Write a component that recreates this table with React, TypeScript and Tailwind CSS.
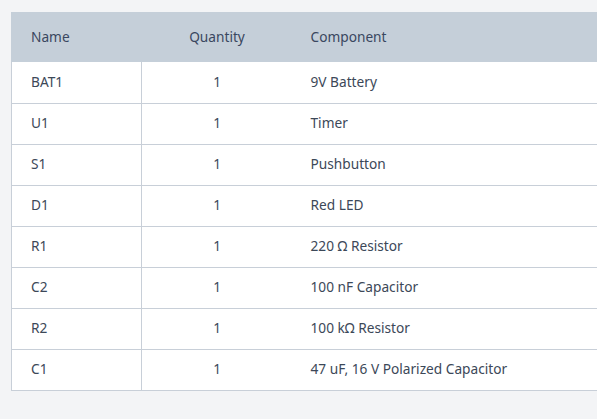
import React from "react";

const rows: [string, string, string][] = [
  ["BAT1", "1", "9V Battery"],
  ["U1", "1", "Timer"],
  ["S1", "1", "Pushbutton"],
  ["D1", "1", "Red LED"],
  ["R1", "1", "220 Ω Resistor"],
  ["C2", "1", "100 nF Capacitor"],
  ["R2", "1", "100 kΩ Resistor"],
  ["C1", "1", "47 uF, 16 V Polarized Capacitor"],
];

export default function App() {
  return (
    <div
      className="w-[597px] h-[419px] bg-[#f3f4f6] overflow-hidden pt-[12px] pl-[11px]"
      style={{ fontFamily: '"Noto Sans", "Open Sans", sans-serif' }}
    >
      <table className="w-[640px] border-collapse text-[13.7px] text-[#3c4858] table-fixed">
        <colgroup>
          <col className="w-[130px]" />
          <col className="w-[151px]" />
          <col />
        </colgroup>
        <thead>
          <tr className="bg-[#c5cfd9] h-[50px]">
            <th className="text-left font-normal pl-[19px] text-[#3a4760] border-l border-[#c5cfd9]">Name</th>
            <th className="text-center font-normal text-[#3a4760]">Quantity</th>
            <th className="text-left font-normal pl-[18px] text-[#3a4760]">Component</th>
          </tr>
        </thead>
        <tbody className="bg-white">
          {rows.map((r, i) => (
            <tr key={i} className="h-[41px] border-b border-[#c8cfd8]">
              <td className="pl-[19px] border-l border-r border-[#c8cfd8]">{r[0]}</td>
              <td className="text-center">{r[1]}</td>
              <td className="pl-[18px]">{r[2]}</td>
            </tr>
          ))}
        </tbody>
      </table>
    </div>
  );
}
